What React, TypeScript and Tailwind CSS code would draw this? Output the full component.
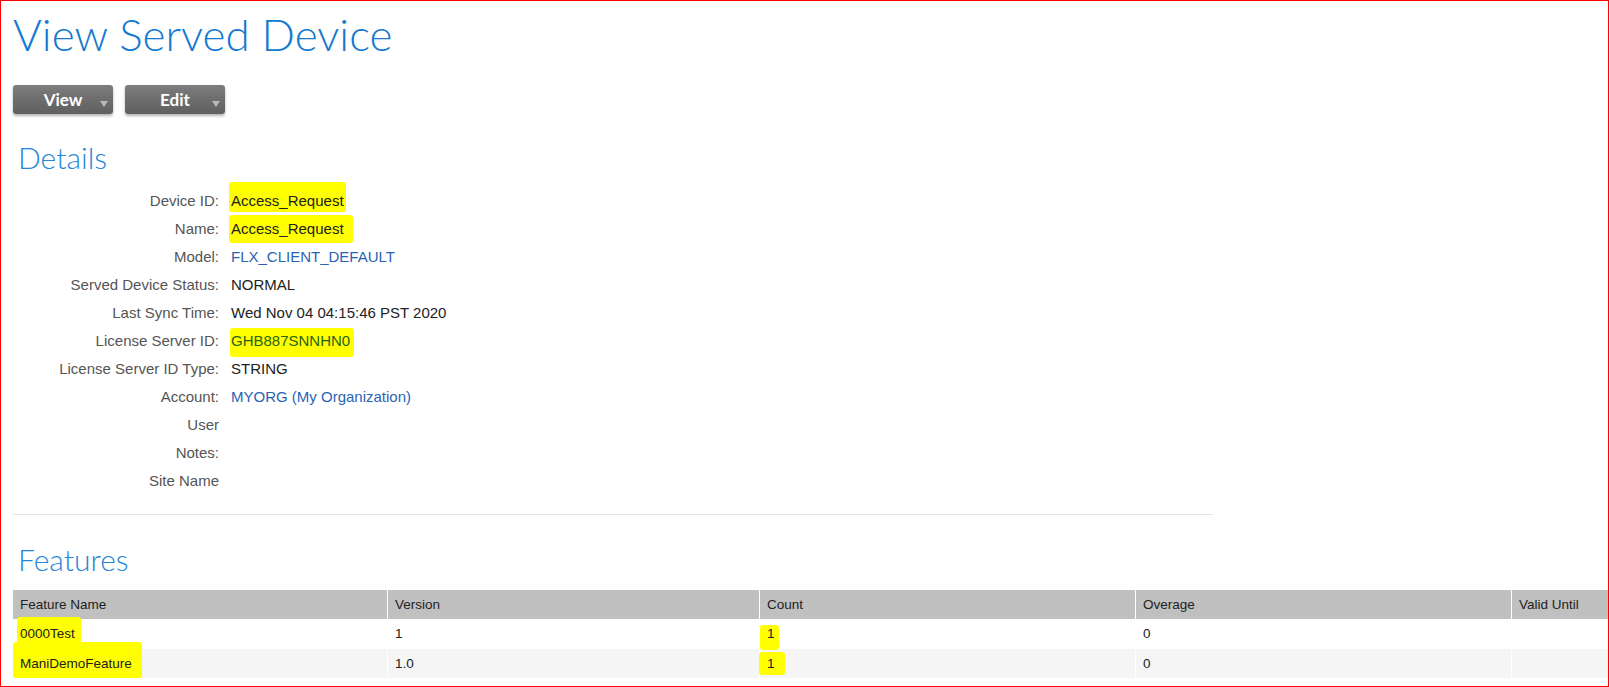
import type { ReactNode } from 'react';

// highlighter stroke drawn behind a bit of text
function Mark({ children, className }: { children: ReactNode; className: string }) {
  return (
    <span className="relative inline-block">
      <span className={`absolute rounded-[3px] bg-[#ffff00] ${className}`} />
      <span className="relative">{children}</span>
    </span>
  );
}

function MenuButton({ label }: { label: string }) {
  return (
    <button className="relative h-[29px] w-[100px] rounded-[3px] bg-gradient-to-b from-[#7d7d7d] to-[#5f5f5f] font-['Lato'] text-[17px] font-bold text-white shadow-[0_2px_3px_rgba(0,0,0,0.3)]">
      {label}
      <span className="absolute right-[5px] top-[16px] h-0 w-0 border-x-[4px] border-t-[6px] border-x-transparent border-t-[#b9b9b9]" />
    </button>
  );
}

const link = 'text-[#2b63b4]';

const details: { label: string; value: ReactNode }[] = [
  {
    label: 'Device ID:',
    value: <Mark className="-left-[2px] -right-[2px] -top-[5px] bottom-[3px]">Access_Request</Mark>,
  },
  {
    label: 'Name:',
    value: <Mark className="-left-[2px] -right-[9px] top-0 bottom-0">Access_Request</Mark>,
  },
  { label: 'Model:', value: <span className={link}>FLX_CLIENT_DEFAULT</span> },
  { label: 'Served Device Status:', value: 'NORMAL' },
  { label: 'Last Sync Time:', value: 'Wed Nov 04 04:15:46 PST 2020' },
  {
    label: 'License Server ID:',
    value: (
      <Mark className="-left-[1px] -right-[4px] top-[1px] -bottom-[2px]">
        <span className="text-[#26630f]">GHB887SNNHN0</span>
      </Mark>
    ),
  },
  { label: 'License Server ID Type:', value: 'STRING' },
  { label: 'Account:', value: <span className={link}>MYORG (My Organization)</span> },
  { label: 'User', value: '' },
  { label: 'Notes:', value: '' },
  { label: 'Site Name', value: '' },
];

const cols = 'grid grid-cols-[374px_371px_375px_375px_1fr] gap-x-px';

export default function App() {
  return (
    <div className="h-[687px] w-[1609px] overflow-hidden border border-[#ff0000] bg-white font-['Liberation_Sans',Arial,sans-serif]">
      <div className="pl-[12px] pt-[11px]">
        <h1 className="font-['Lato'] text-[44px] font-light leading-none text-[#1479cf]">View Served Device</h1>

        <div className="mt-[29px] flex gap-[12px]">
          <MenuButton label="View" />
          <MenuButton label="Edit" />
        </div>

        <h2 className="ml-[5px] mt-[28px] font-['Lato'] text-[30px] font-light leading-none text-[#2386d6]">Details</h2>

        <div className="mt-[15px] text-[15px] leading-[28px]">
          {details.map((d) => (
            <div key={d.label} className="flex h-[28px] gap-[12px]">
              <div className="w-[206px] text-right text-[#555]">{d.label}</div>
              <div className="text-[#222]">{d.value}</div>
            </div>
          ))}
        </div>

        <div className="mt-[19px] w-[1200px] border-t border-[#e5e5e5]" />

        <h2 className="ml-[5px] mt-[29px] font-['Lato'] text-[30px] font-light leading-none text-[#2386d6]">Features</h2>

        <div className="mt-[16px] text-[13.5px] text-[#222]">
          <div className={`${cols} h-[29px] leading-[29px]`}>
            {['Feature Name', 'Version', 'Count', 'Overage', 'Valid Until'].map((h) => (
              <div key={h} className="bg-[#c0c0c0] pl-[7px]">
                {h}
              </div>
            ))}
          </div>
          <div className={`${cols} h-[30px] leading-[30px]`}>
            <div className="pl-[7px]">
              <Mark className="-left-[3px] -right-[6px] -top-[2px] bottom-[5px]">0000Test</Mark>
            </div>
            <div className="pl-[7px]">1</div>
            <div className="pl-[7px]">
              <Mark className="-left-[7px] -right-[4px] top-[6px] -bottom-[1px]">1</Mark>
            </div>
            <div className="pl-[7px]">0</div>
            <div />
          </div>
          <div className={`${cols} h-[29px] leading-[29px]`}>
            <div className="bg-[#f5f5f5] pl-[7px]">
              <Mark className="-left-[7px] -right-[10px] -top-[7px] bottom-0">ManiDemoFeature</Mark>
            </div>
            <div className="bg-[#f5f5f5] pl-[7px]">1.0</div>
            <div className="bg-[#f5f5f5] pl-[7px]">
              <Mark className="-left-[8px] -right-[10px] top-[3px] bottom-[3px]">1</Mark>
            </div>
            <div className="bg-[#f5f5f5] pl-[7px]">0</div>
            <div className="bg-[#f5f5f5]" />
          </div>
        </div>
      </div>
    </div>
  );
}
